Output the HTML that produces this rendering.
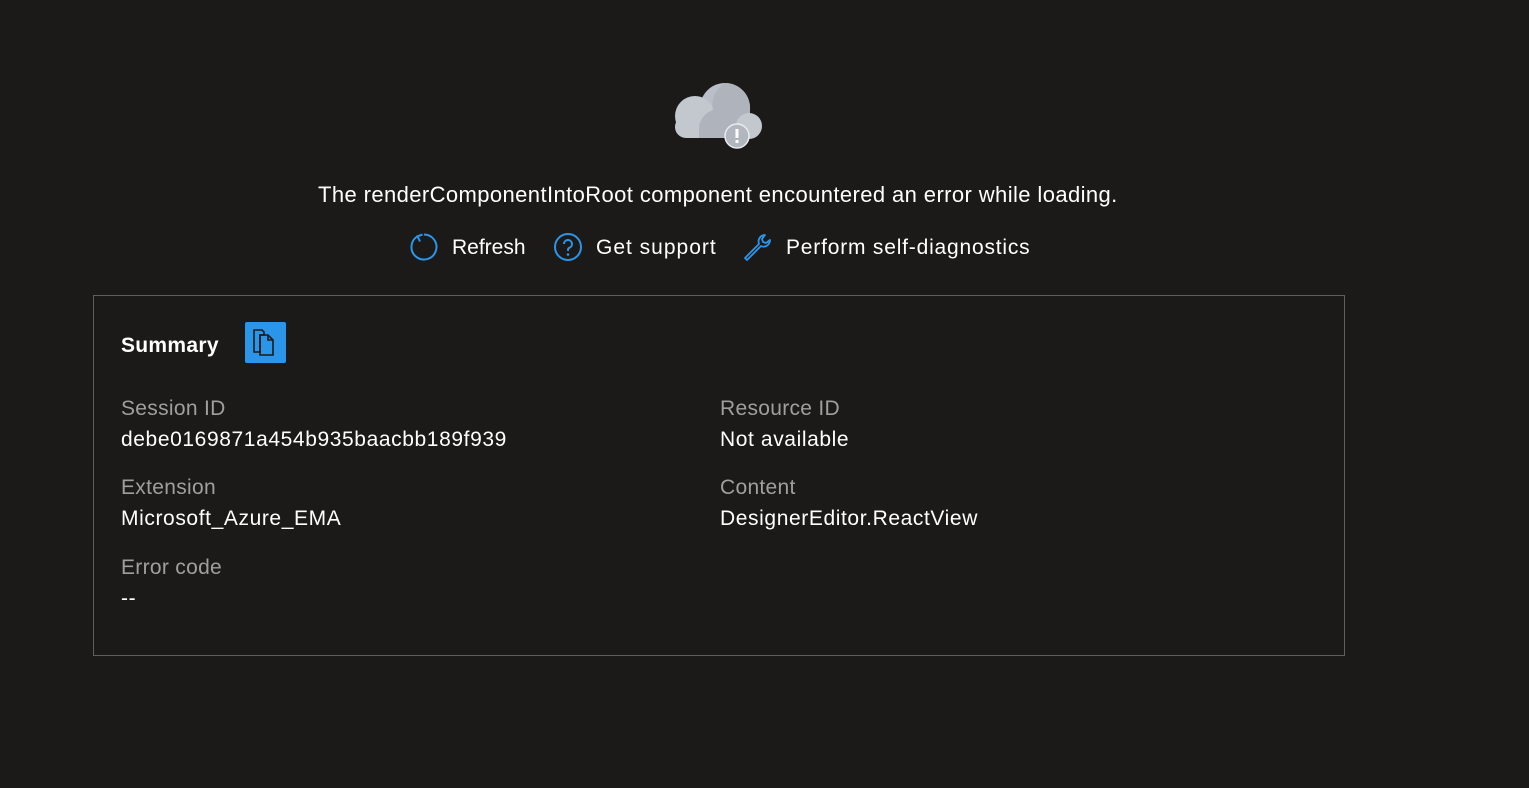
<!DOCTYPE html>
<html><head><meta charset="utf-8"><style>
body{margin:0;width:1529px;height:788px;background:#1b1a19;font-family:"Liberation Sans",sans-serif;color:#fff;position:relative;overflow:hidden}
.a{position:absolute;white-space:nowrap}
.t{font-size:21px}
.lbl{color:#a19f9d;font-size:21px;letter-spacing:0.3px}
.val{font-size:21px;letter-spacing:0.6px}
.box{position:absolute;left:93px;top:295px;width:1250px;height:359px;border:1px solid #5f5e5c}
</style></head><body>
<svg class="a" style="left:673px;top:80px" width="92" height="70" viewBox="0 0 92 70">
<circle cx="52" cy="28" r="25" fill="#b9bec7"/>
<circle cx="22" cy="36" r="20" fill="#c3c8cf"/>
<rect x="2" y="36" width="86" height="22" rx="11" fill="#c3c8cf"/>
<path d="M52 3a25 25 0 0 1 25 27v28H26V50a20 20 0 0 1 14-20a25 25 0 0 1 12-27z" fill="#aeb3bc"/>
<circle cx="76" cy="46" r="13" fill="#c3c8cf"/>
<circle cx="64" cy="56" r="12" fill="#b2b7bf" stroke="#e8eaed" stroke-width="1.5"/>
<rect x="62.5" y="49" width="3" height="9" fill="#fff"/><rect x="62.5" y="60" width="3" height="3" fill="#fff"/>
</svg>
<div class="a" style="left:318px;top:182px;font-size:22px;letter-spacing:0.4px">The renderComponentIntoRoot component encountered an error while loading.</div>
<svg class="a" style="left:409px;top:232px" width="30" height="30" viewBox="0 0 30 30"><path d="M15 2.5A12.5 12.5 0 1 1 8.5 4.3" fill="none" stroke="#2b95e9" stroke-width="2"/><path d="M11 9.5L8.5 4.3L13.5 2.5" fill="none" stroke="#2b95e9" stroke-width="2"/></svg>
<div class="a t" style="left:452px;top:236px">Refresh</div>
<svg class="a" style="left:553px;top:232px" width="30" height="30" viewBox="0 0 30 30"><circle cx="15" cy="15" r="13" fill="none" stroke="#2b95e9" stroke-width="2"/><path d="M11 12a4 4 0 1 1 5.5 3.7c-1 .5-1.5 1.2-1.5 2.3v1" fill="none" stroke="#2b95e9" stroke-width="2"/><circle cx="15" cy="22.5" r="1.3" fill="#2b95e9"/></svg>
<div class="a t" style="left:596px;top:236px;letter-spacing:1px">Get support</div>
<svg class="a" style="left:742px;top:232px" width="32" height="30" viewBox="0 0 32 30"><path d="M3 26l14-14c-1.5-4 1-9 6-9l-3 4 1 3 3 1 4-3c0 5-5 8-9 6L5 28z" fill="none" stroke="#2b95e9" stroke-width="1.8" stroke-linejoin="round"/></svg>
<div class="a t" style="left:786px;top:236px;letter-spacing:0.8px">Perform self-diagnostics</div>
<div class="box"></div>
<div class="a" style="left:121px;top:334px;font-size:21px;font-weight:bold;letter-spacing:0.3px">Summary</div>
<div class="a" style="left:245px;top:322px;width:41px;height:41px;background:#2b95e9;border-radius:2px">
<svg width="41" height="41" viewBox="0 0 41 41"><path d="M9 8h8l2 2v3h-4v17H9z" fill="none" stroke="#1b1a19" stroke-width="1.6"/><path d="M15 13h8l5 5v15H15z" fill="none" stroke="#1b1a19" stroke-width="1.6"/><path d="M23 13v5h5" fill="none" stroke="#1b1a19" stroke-width="1.6"/></svg></div>
<div class="a lbl" style="left:121px;top:397px">Session ID</div>
<div class="a val" style="left:121px;top:428px">debe0169871a454b935baacbb189f939</div>
<div class="a lbl" style="left:121px;top:476px">Extension</div>
<div class="a val" style="left:121px;top:507px">Microsoft_Azure_EMA</div>
<div class="a lbl" style="left:121px;top:556px">Error code</div>
<div class="a val" style="left:121px;top:587px">--</div>
<div class="a lbl" style="left:720px;top:397px">Resource ID</div>
<div class="a val" style="left:720px;top:428px">Not available</div>
<div class="a lbl" style="left:720px;top:476px">Content</div>
<div class="a val" style="left:720px;top:507px">DesignerEditor.ReactView</div>
</body></html>
